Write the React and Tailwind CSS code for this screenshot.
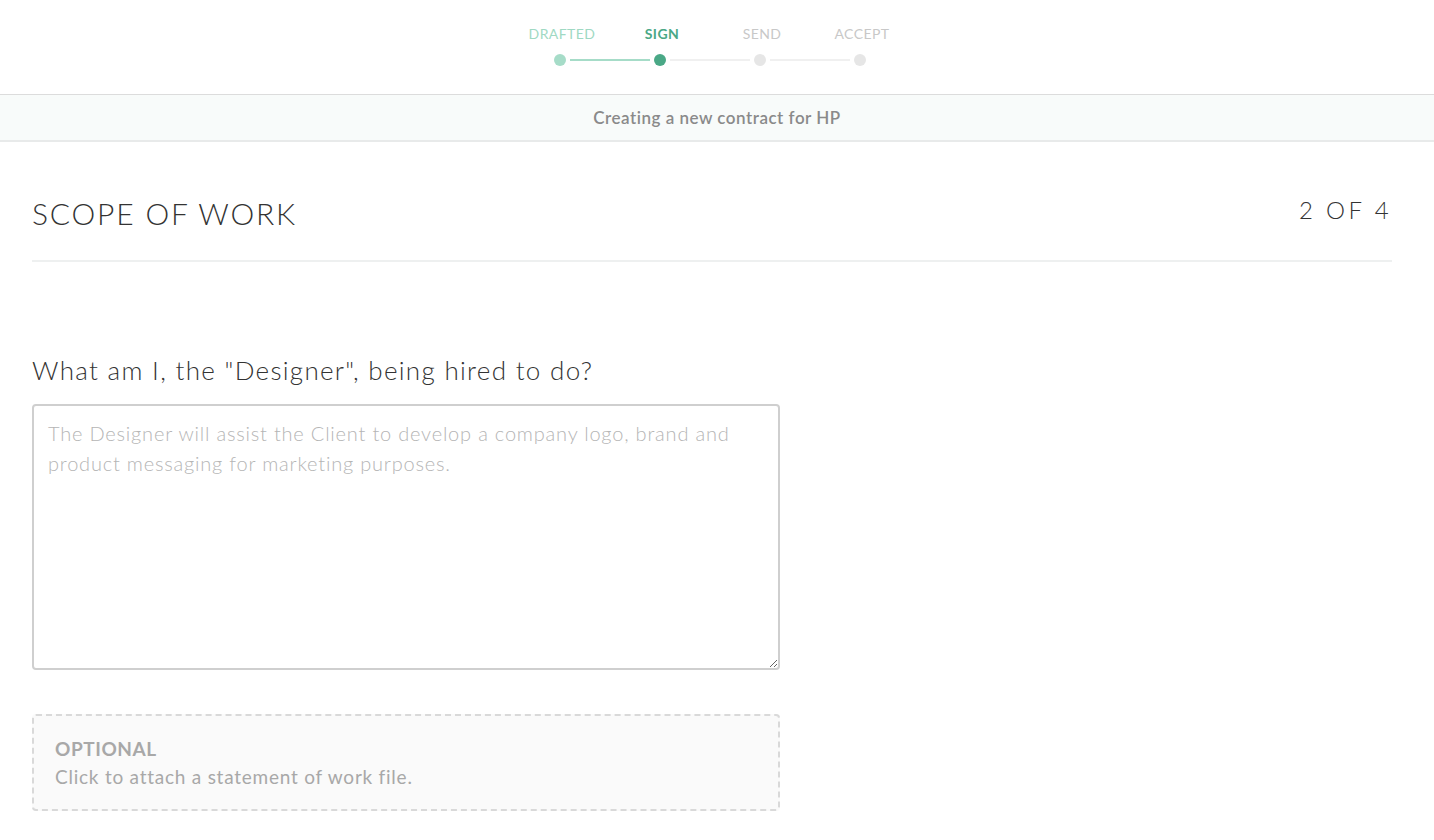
import React from 'react'

const STEPS = [
  { label: 'DRAFTED', state: 'done' },
  { label: 'SIGN', state: 'current' },
  { label: 'SEND', state: 'todo' },
  { label: 'ACCEPT', state: 'todo' },
]

function Stepper() {
  return (
    <div className="flex justify-center pt-[25px] pr-[14px]">
      {STEPS.map((s, i) => {
        const labelCls =
          s.state === 'done'
            ? 'text-[#9fd9c3]'
            : s.state === 'current'
              ? 'text-[#4aa886] font-bold'
              : 'text-[#c8c8c8]'
        const dotCls =
          s.state === 'done' ? 'bg-[#a6dcc8]' : s.state === 'current' ? 'bg-[#4aa886]' : 'bg-[#e6e6e6]'
        const lineCls = i === 0 ? 'bg-[#a6dcc8]' : 'bg-[#f0f0f0]'
        return (
          <div key={s.label} className="relative w-[100px] flex flex-col items-center">
            <span className={`pl-[4px] text-[14px] leading-[18px] tracking-[0.03em] ${labelCls}`}>{s.label}</span>
            <span className={`mt-[11px] w-[12px] h-[12px] rounded-full ${dotCls}`} />
            {i < STEPS.length - 1 && (
              <span className={`absolute left-[60px] top-[34px] w-[80px] h-[2px] ${lineCls}`} />
            )}
          </div>
        )
      })}
    </div>
  )
}

export default function App() {
  return (
    <div className="min-h-screen bg-white font-['Lato','Noto_Sans',sans-serif] text-[#333]">
      <header className="h-[95px] border-b border-[#dcdcdc]">
        <Stepper />
      </header>
      <div className="h-[47px] bg-[#f8fbfa] border-b-2 border-[#e8eaea] flex items-center justify-center">
        <span className="text-[17px] font-semibold tracking-[0.03em] text-[#8a8a8a]">Creating a new contract for HP</span>
      </div>

      <main className="px-[32px]">
        <div className="flex items-center justify-between pt-[53px] pb-[25px] border-b-2 border-[#eef0f0] w-[1360px]">
          <h1 className="mb-[4px] text-[30px] font-light tracking-[0.06em] leading-[36px] text-[#333]">SCOPE OF WORK</h1>
          <span className="text-[24px] font-light tracking-[0.14em] text-[#333] -mt-[10px]">2 OF 4</span>
        </div>

        <h2 className="mt-[91px] text-[26px] font-light leading-[34px] tracking-[0.05em] text-[#333]">
          What am I, the "Designer", being hired to do?
        </h2>

        <textarea
          className="mt-[17px] block w-[748px] h-[266px] border-2 border-[#cfcfcf] rounded-[4px] px-[14px] py-[12px] text-[20px] leading-[30px] font-light tracking-[0.04em] text-[#333] placeholder:text-[#b5b5b5] outline-none"
          placeholder="The Designer will assist the Client to develop a company logo, brand and product messaging for marketing purposes."
        />

        <div className="mt-[44px] w-[748px] h-[97px] border-2 border-dashed border-[#d9d9d9] rounded-[4px] bg-[#fafafa] px-[21px] pt-[20px] cursor-pointer">
          <div className="text-[19px] font-bold leading-[26px] tracking-[0.03em] text-[#a8a8a8]">OPTIONAL</div>
          <div className="text-[19px] leading-[30px] tracking-[0.04em] text-[#a8a8a8]">Click to attach a statement of work file.</div>
        </div>
      </main>
    </div>
  )
}
